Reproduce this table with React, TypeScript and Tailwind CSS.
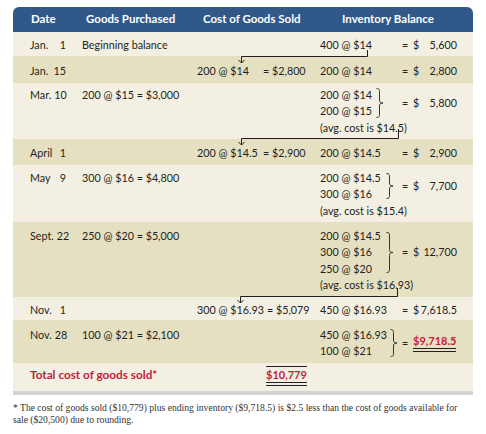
import React from "react";

type Inv =
  | { kind: "single"; qty: string; amt: string }
  | {
      kind: "group";
      lines: string[];
      qtyW: string;
      braceW: string;
      braceH: number;
      amt: string;
      avg?: string;
      red?: boolean;
    };

type Row = {
  month: string;
  day: string;
  rowCls: string;
  purchase?: string;
  cogs?: [string, string];
  inv: Inv;
};

const rows: Row[] = [
  {
    month: "Jan.",
    day: "1",
    rowCls: "bg-[#f3f0e3] h-[24px] pt-[5px]",
    purchase: "Beginning balance",
    inv: { kind: "single", qty: "400 @ $14", amt: "5,600" },
  },
  {
    month: "Jan.",
    day: "15",
    rowCls: "bg-[#e6e0c2] h-[27px] pt-[6.5px]",
    cogs: ["200 @ $14", "= $2,800"],
    inv: { kind: "single", qty: "200 @ $14", amt: "2,800" },
  },
  {
    month: "Mar.",
    day: "10",
    rowCls: "bg-[#f3f0e3] h-[56px] pt-[3.5px]",
    purchase: "200 @ $15 = $3,000",
    inv: {
      kind: "group",
      lines: ["200 @ $14", "200 @ $15"],
      qtyW: "w-[56px]",
      braceW: "w-[26px]",
      braceH: 30,
      amt: "5,800",
      avg: "(avg. cost is $14.5)",
    },
  },
  {
    month: "April",
    day: "1",
    rowCls: "bg-[#e6e0c2] h-[26px] pt-[5.5px]",
    cogs: ["200 @ $14.5", "= $2,900"],
    inv: { kind: "single", qty: "200 @ $14.5", amt: "2,900" },
  },
  {
    month: "May",
    day: "9",
    rowCls: "bg-[#f3f0e3] h-[57px] pt-[4.5px]",
    purchase: "300 @ $16 = $4,800",
    inv: {
      kind: "group",
      lines: ["200 @ $14.5", "300 @ $16"],
      qtyW: "w-[66px]",
      braceW: "w-[16px]",
      braceH: 26,
      amt: "7,700",
      avg: "(avg. cost is $15.4)",
    },
  },
  {
    month: "Sept.",
    day: "22",
    rowCls: "bg-[#e6e0c2] h-[75px] pt-[5.5px]",
    purchase: "250 @ $20 = $5,000",
    inv: {
      kind: "group",
      lines: ["200 @ $14.5", "300 @ $16", "250 @ $20"],
      qtyW: "w-[66px]",
      braceW: "w-[16px]",
      braceH: 41,
      amt: "12,700",
      avg: "(avg. cost is $16.93)",
    },
  },
  {
    month: "Nov.",
    day: "1",
    rowCls: "bg-[#f3f0e3] h-[23px] pt-[4.5px]",
    cogs: ["300 @ $16.93", "= $5,079"],
    inv: { kind: "single", qty: "450 @ $16.93", amt: "7,618.5" },
  },
  {
    month: "Nov.",
    day: "28",
    rowCls: "bg-[#e6e0c2] h-[43px] pt-[6.5px]",
    purchase: "100 @ $21 = $2,100",
    inv: {
      kind: "group",
      lines: ["450 @ $16.93", "100 @ $21"],
      qtyW: "w-[70px]",
      braceW: "w-[12px]",
      braceH: 28,
      amt: "$9,718.5",
      red: true,
    },
  },
];

const Brace = ({ h }: { h: number }) => {
  const m = h / 2;
  const d = `M0.5,0.5 C3.5,0.5 3.5,2 3.5,4 L3.5,${m - 3} C3.5,${m - 1} 4.5,${m} 7,${m} C4.5,${m} 3.5,${m + 1} 3.5,${m + 3} L3.5,${h - 4} C3.5,${h - 2} 3.5,${h - 0.5} 0.5,${h - 0.5}`;
  return (
    <svg width="8" height={h} viewBox={`0 0 8 ${h}`}>
      <path d={d} fill="none" stroke="#231f20" strokeWidth="0.9" />
    </svg>
  );
};

const Equals = ({ amt, red }: { amt: string; red?: boolean }) => (
  <div className="flex w-[55px] items-center">
    <span className="w-[11px]">=</span>
    {red ? (
      <span className="border-b-[4px] border-double border-[#231f20] text-[11px] font-bold leading-[14px] text-[#c51b3b]">
        {amt}
      </span>
    ) : (
      <>
        <span>$</span>
        <span className="flex-1 text-right">{amt}</span>
      </>
    )}
  </div>
);

const InventoryCell = ({ inv }: { inv: Inv }) => {
  if (inv.kind === "single") {
    return (
      <div className="flex">
        <div className="w-[82px]">{inv.qty}</div>
        <Equals amt={inv.amt} />
      </div>
    );
  }
  return (
    <div className="flex flex-col">
      <div className="flex">
        <div className={`${inv.qtyW} flex flex-col`}>
          {inv.lines.map((l) => (
            <div key={l}>{l}</div>
          ))}
        </div>
        <div className={`${inv.braceW} flex items-center`}>
          <Brace h={inv.braceH} />
        </div>
        <div className="flex items-center">
          <Equals amt={inv.amt} red={inv.red} />
        </div>
      </div>
      {inv.avg && <div>{inv.avg}</div>}
    </div>
  );
};

export default function App() {
  return (
    <div className="h-[434px] w-[486px] bg-white pt-[7px]">
      <div className="relative ml-[13px] w-[460px] font-['Lato',sans-serif] text-[10.75px] leading-[16.5px] text-[#231f20]">
        <div className="flex h-[25px] items-center rounded-t-[6px] bg-[#30598a] pl-[18px] text-[11.5px] font-bold text-white">
          <div className="w-[55px]">Date</div>
          <div className="w-[117px]">Goods Purchased</div>
          <div className="w-[139px]">Cost of Goods Sold</div>
          <div>Inventory Balance</div>
        </div>

        {rows.map((r, i) => (
          <div key={i} className={`flex items-start pl-[17px] ${r.rowCls}`}>
            <div className="flex w-[36px] justify-between gap-[3px]">
              <span>{r.month}</span>
              <span>{r.day}</span>
            </div>
            <div className="ml-[16px] w-[115px]">{r.purchase}</div>
            <div className="flex w-[123px]">
              {r.cogs && (
                <>
                  <span className="min-w-[66px] pr-[3px]">{r.cogs[0]}</span>
                  <span>{r.cogs[1]}</span>
                </>
              )}
            </div>
            <InventoryCell inv={r.inv} />
          </div>
        ))}

        <div className="flex h-[28px] items-start bg-[#f3f0e3] pl-[17px] pt-[3px]">
          <div className="w-[167px] pt-[1px] text-[11.75px] font-bold text-[#c51b3b]">
            Total cost of goods sold*
          </div>
          <div className="pl-[69px]">
            <span className="inline-block border-t border-b-[4px] border-t-[#231f20] border-b-[#231f20] border-double pt-[1px] text-[11px] font-bold leading-[14px] text-[#c51b3b] [border-top-style:solid]">
              $10,779
            </span>
          </div>
        </div>
        <div className="h-[4px] bg-[#d4d4d4]" />

        <svg
          className="pointer-events-none absolute left-0 top-0"
          width="460"
          height="390"
          viewBox="0 0 460 390"
        >
          <g fill="none" stroke="#231f20" strokeWidth="1">
            <path d="M228.5,49.5 H354.5 V43" />
            <path d="M228.5,49.5 V56 M225.5,53 L228.5,56 L231.5,53" />
            <path d="M228.5,131.5 H385.5 V122" />
            <path d="M228.5,131.5 V138 M225.5,135 L228.5,138 L231.5,135" />
            <path d="M227.5,289.5 H384.5 V281" />
            <path d="M227.5,289.5 V296 M224.5,293 L227.5,296 L230.5,293" />
          </g>
        </svg>
      </div>

      <p className="ml-[13px] mt-[7px] font-['Liberation_Serif',serif] text-[9.6px] leading-[12px] text-[#333]">
        * The cost of goods sold ($10,779) plus ending inventory ($9,718.5) is $2.5 less than the cost of goods available for
        <br />
        sale ($20,500) due to rounding.
      </p>
    </div>
  );
}
